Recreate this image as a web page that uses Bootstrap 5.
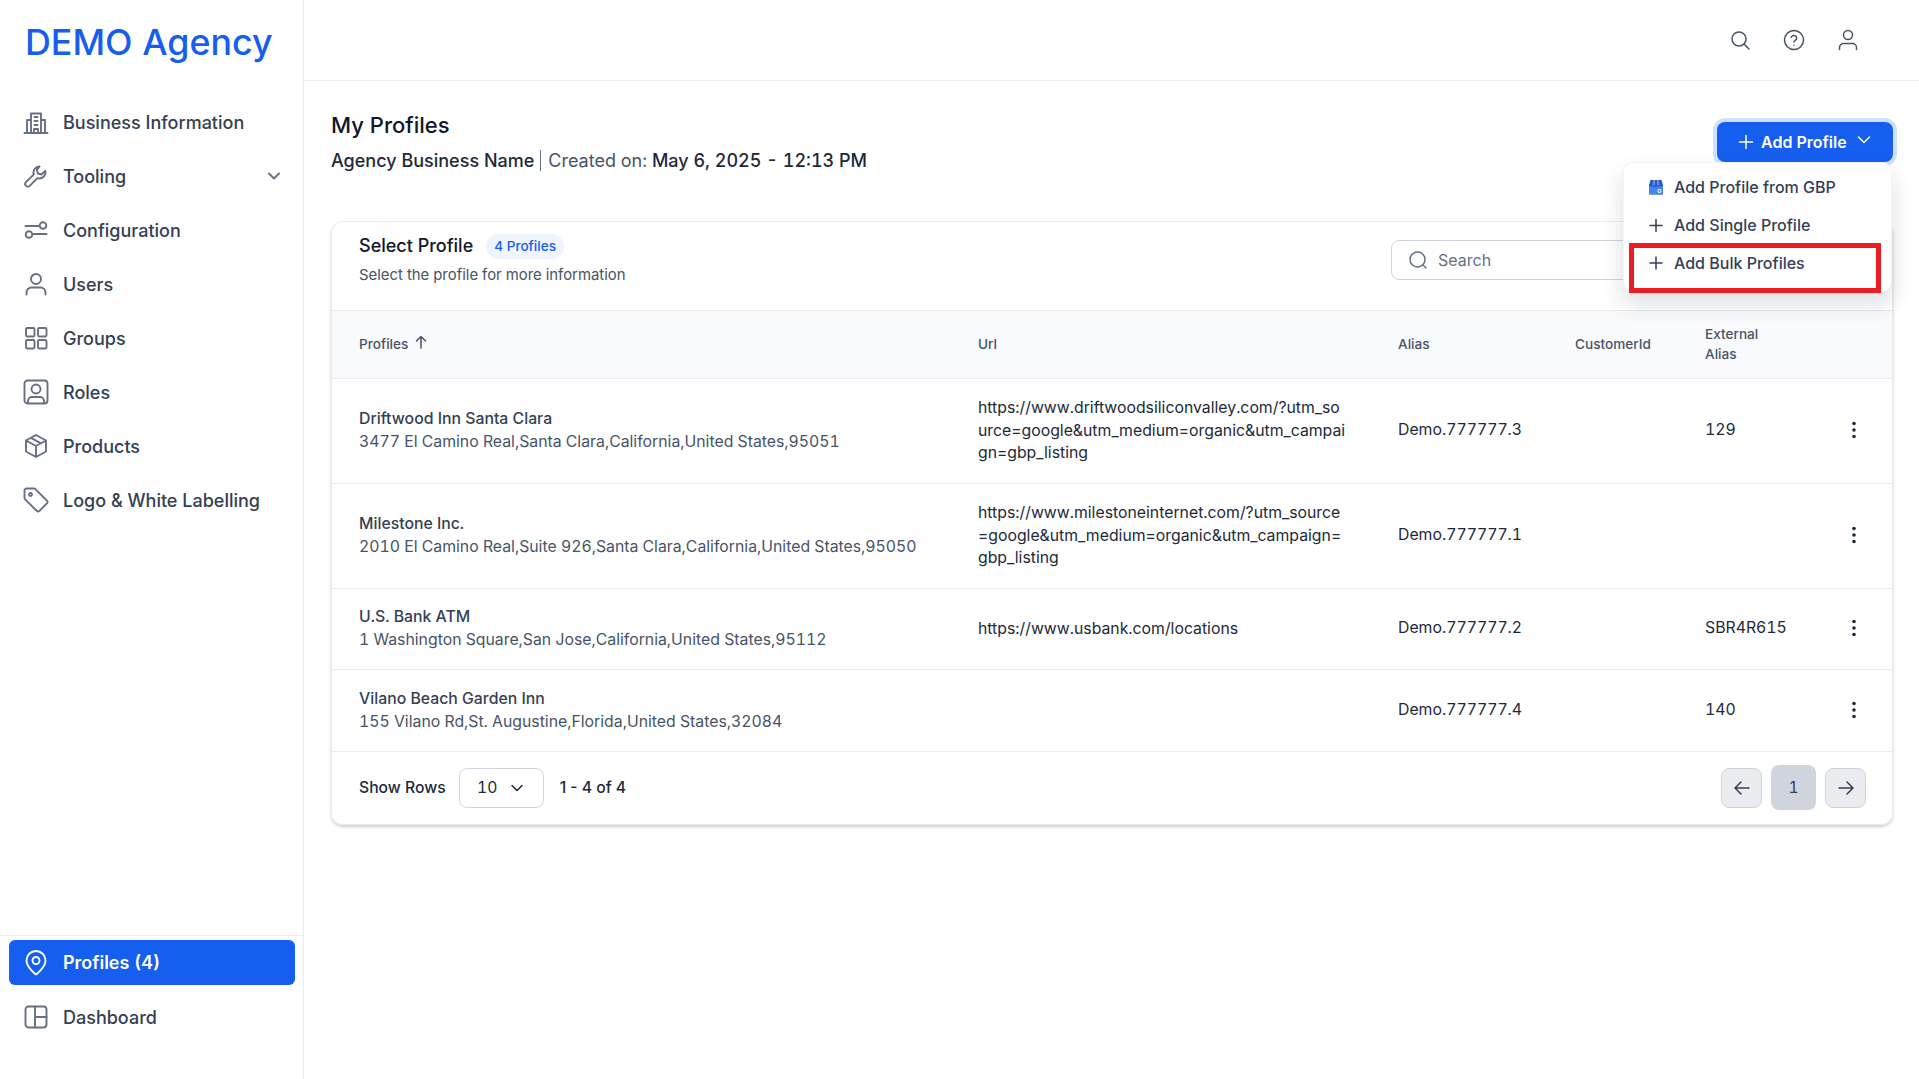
<!DOCTYPE html>
<html lang="en">
<head>
    <meta charset="UTF-8">
    <meta name="viewport" content="width=device-width, initial-scale=1.0">
    <title>My Profiles</title>
    <link href="https://cdn.jsdelivr.net/npm/bootstrap@5.3.2/dist/css/bootstrap.min.css" rel="stylesheet">
    <style>
        body {
            font-family: Inter, "Liberation Sans", sans-serif;
            font-variant-numeric: tabular-nums;
            color: #1d2939;
            background: #fff;
            height: 1079px;
            overflow: hidden;
        }
        svg.ico {
            fill: none;
            stroke: currentColor;
            stroke-width: 1.5;
            stroke-linecap: round;
            stroke-linejoin: round;
            flex-shrink: 0;
        }
        .side-bar {
            width: 304px;
            flex-shrink: 0;
            height: 1079px;
            border-right: 1px solid #eaecf0;
        }
        .brand-name {
            font-size: 35.8px;
            font-weight: 500;
            line-height: 44px;
            color: #155eef;
            padding: 20px 0 0 25px;
            height: 95px;
            white-space: nowrap;
        }
        .side-link {
            display: flex;
            align-items: center;
            height: 54px;
            padding-left: 23px;
            padding-right: 20px;
            font-size: 18px;
            font-weight: 500;
            color: #344054;
            text-decoration: none;
            white-space: nowrap;
        }
        .side-link svg.ico { color: #667085; margin-right: 14px; stroke-width: 1.9; }
        .side-foot {
            margin-top: auto;
            border-top: 1px solid #eaecf0;
            padding: 4px 8px 35px 9px;
        }
        .side-foot .side-link { padding-left: 14px; height: 54px; }
        .side-foot .side-link.is-on {
            height: 45px;
            background: #155eef;
            color: #fff;
            border-radius: 6px;
            margin-bottom: 5px;
            font-weight: 600;
        }
        .side-foot .side-link.is-on svg.ico { color: #fff; }
        .main-area { flex: 1 1 0; min-width: 0; }
        .top-strip {
            height: 81px;
            border-bottom: 1px solid #eaecf0;
            padding-right: 59px;
            color: #475467;
            gap: 30px;
        }
        .page-body { padding: 0 26px 0 27px; position: relative; }
        .page-head { height: 140px; padding-top: 29px; }
        .page-title { font-size: 22px; font-weight: 500; line-height: 30px; color: #101828; margin: 0 0 7px; }
        .page-sub { font-size: 18px; line-height: 28px; font-weight: 500; color: #1d2939; }
        .page-sub .sep { border-left: 1px solid #667085; margin: 0 7px 0 6px; }
        .page-sub .dim { font-weight: 400; color: #475467; }
        .add-btn {
            position: absolute;
            top: 41px;
            right: 26px;
            width: 176px;
            height: 40px;
            background: #155eef;
            color: #fff;
            border: 0;
            border-radius: 8px;
            font-size: 16px;
            font-weight: 600;
            box-shadow: 0 0 0 4px #d1e0ff;
            display: flex;
            align-items: center;
            padding: 0 20px;
            gap: 6px;
            white-space: nowrap;
        }
        .add-menu {
            position: absolute;
            top: 81px;
            right: 27px;
            width: 269px;
            height: 130px;
            background: #fff;
            border: 1px solid #f2f4f7;
            border-radius: 10px;
            box-shadow: 0 12px 24px rgba(16, 24, 40, .14);
            z-index: 5;
            padding-top: 5px;
        }
        .add-menu-row {
            display: flex;
            align-items: center;
            height: 38px;
            padding-left: 24px;
            gap: 10px;
            font-size: 16px;
            font-weight: 500;
            color: #344054;
        }
        .add-menu-row:last-of-type { margin-top: 2px; }
        .add-menu-row svg.ico { color: #344054; }
        .red-box {
            position: absolute;
            left: 5px;
            top: 80px;
            width: 252px;
            height: 50px;
            border: 5px solid #ed1c24;
        }
        .main-card {
            border: 1px solid #eaecf0;
            border-radius: 12px;
            box-shadow: 0 2px 3px rgba(16, 24, 40, .2);
            height: 604px;
            overflow: hidden;
        }
        .card-top { position: relative; height: 89px; padding: 11px 27px 0; border-bottom: 1px solid #eaecf0; }
        .card-name { font-size: 18px; font-weight: 500; color: #101828; line-height: 26px; }
        .count-pill {
            font-size: 13.6px;
            font-weight: 500;
            color: #155eef;
            background: #eff4ff;
            border-radius: 13px;
            padding: 3px 8px;
            margin-left: 13px;
            line-height: 19px;
        }
        .card-hint { font-size: 14.9px; color: #475467; line-height: 20px; margin-top: 6px; }
        .find-box {
            position: absolute;
            left: 1059px;
            top: 18px;
            width: 300px;
            height: 40px;
            border: 1px solid #d0d5dd;
            border-radius: 8px;
            padding-left: 16px;
            gap: 10px;
            font-size: 16px;
            color: #667085;
        }
        .profile-table { table-layout: fixed; width: 100%; border-collapse: collapse; }
        .profile-table th {
            height: 67px;
            background: #f9fafb;
            font-size: 13.6px;
            font-weight: 500;
            color: #475467;
            line-height: 20px;
            border-bottom: 1px solid #eaecf0;
            vertical-align: middle;
        }
        .profile-table td {
            font-size: 15.8px;
            line-height: 22px;
            color: #1d2939;
            border-bottom: 1px solid #eaecf0;
            vertical-align: middle;
            padding-bottom: 2px;
        }
        .profile-table .first-col { padding-left: 27px; }
        .profile-table .dots-col { padding-left: 16px; }
        .row-tall { height: 105px; }
        .row-low { height: 81px; }
        .row-last { height: 82px; }
        .place-name { font-weight: 500; color: #344054; line-height: 23px; }
        .place-addr { color: #475467; line-height: 23px; }
        .url-text { width: 369px; word-break: break-all; line-height: 22.5px; padding-top: 2px; }
        .table-foot { height: 72px; padding: 0 26px 0 27px; font-size: 15.7px; }
        .row-count { font-variant-numeric: normal; }
        .rows-pick {
            width: 85px;
            height: 40px;
            border: 1px solid #d0d5dd;
            border-radius: 8px;
            margin: 0 16px 0 13px;
            gap: 12px;
        }
        .pg-group { gap: 9px; }
        .pg-arrow {
            width: 41px;
            height: 40px;
            background: #eaecf0;
            border: 1px solid #d0d5dd;
            border-radius: 8px;
            color: #344054;
        }
        .pg-now {
            width: 45px;
            height: 45px;
            background: #d0d5dd;
            border-radius: 8px;
            color: #344054;
        }
    </style>
</head>
<body>
<div class="d-flex">
    <aside class="side-bar d-flex flex-column">
        <div class="brand-name">DEMO Agency</div>
        <a class="side-link" href="#"><svg class="ico" width="26" height="26" viewBox="0 0 26 26"><path d="M1.5 24h23M8 24V4.5h10V24M4 24V11h4M22 24V11h-4M11.5 8h3M11.5 12h3M11.5 16h3M11 24v-4h4v4"/></svg>Business Information</a>
        <a class="side-link" href="#"><svg class="ico" width="26" height="26" viewBox="0 0 26 26"><path d="M16.5 3.5a6 6 0 0 0-5.7 7.9L3 19.2a2.6 2.6 0 0 0 3.7 3.7l7.8-7.8a6 6 0 0 0 7.7-7.3l-3.7 3.7-3.6-1-1-3.6z"/></svg>Tooling<svg class="ico ms-auto" style="margin-right:0" width="18" height="18" viewBox="0 0 18 18"><path d="M4 6.5l5 5 5-5"/></svg></a>
        <a class="side-link" href="#"><svg class="ico" width="26" height="26" viewBox="0 0 26 26"><path d="M2.5 9h13M10.5 17h13"/><circle cx="20" cy="8.5" r="3.3"/><circle cx="6" cy="17.5" r="3.3"/></svg>Configuration</a>
        <a class="side-link" href="#"><svg class="ico" width="26" height="26" viewBox="0 0 26 26"><circle cx="13" cy="8" r="5"/><path d="M3.5 23.5v-2a5 5 0 0 1 5-5h9a5 5 0 0 1 5 5v2"/></svg>Users</a>
        <a class="side-link" href="#"><svg class="ico" width="26" height="26" viewBox="0 0 26 26"><rect x="3" y="3" width="8.5" height="8.5" rx="1.2"/><rect x="15" y="3" width="8.5" height="8.5" rx="1.2"/><rect x="3" y="15" width="8.5" height="8.5" rx="1.2"/><rect x="15" y="15" width="8.5" height="8.5" rx="1.2"/></svg>Groups</a>
        <a class="side-link" href="#"><svg class="ico" width="26" height="26" viewBox="0 0 26 26"><rect x="1.5" y="1.5" width="23" height="23" rx="3"/><circle cx="13" cy="10" r="4.5"/><path d="M5 24v-2a4 4 0 0 1 4-4h8a4 4 0 0 1 4 4v2"/></svg>Roles</a>
        <a class="side-link" href="#"><svg class="ico" width="26" height="26" viewBox="0 0 26 26"><path d="M13 2l10 5.5v11L13 24 3 18.500v-11zM3 7.500l10 5.500 10-5.500M13 13v11M8 4.800l10 5.500"/></svg>Products</a>
        <a class="side-link" href="#"><svg class="ico" width="26" height="26" viewBox="0 0 26 26"><path d="M1.500 3.500a2 2 0 0 1 2-2h7.500a2 2 0 0 1 1.400.600l11.500 11.500a2 2 0 0 1 0 2.800l-7.400 7.400a2 2 0 0 1-2.800 0L2.100 12.400a2 2 0 0 1-.6-1.400z"/><circle cx="7.500" cy="7.500" r="1.500"/></svg>Logo &amp; White Labelling</a>
        <div class="side-foot">
            <a class="side-link is-on" href="#"><svg class="ico" width="26" height="26" viewBox="0 0 26 26"><path d="M13 24.500s9.500-7.200 9.500-14a9.500 9.500 0 0 0-19 0c0 6.800 9.500 14 9.500 14z"/><circle cx="13" cy="10.500" r="3.500"/></svg>Profiles (4)</a>
            <a class="side-link" href="#"><svg class="ico" width="26" height="26" viewBox="0 0 26 26"><rect x="2.500" y="2.500" width="21" height="21" rx="3"/><path d="M12 2.500v21M12 13h11.500"/></svg>Dashboard</a>
        </div>
    </aside>
    <div class="main-area">
        <div class="top-strip d-flex align-items-center justify-content-end">
            <svg class="ico" width="24" height="24" viewBox="0 0 24 24"><circle cx="11" cy="11" r="7"/><path d="M16 16l5 5"/></svg>
            <svg class="ico" width="24" height="24" viewBox="0 0 24 24"><circle cx="12" cy="12" r="9.500"/><path d="M9.300 9.300a2.800 2.800 0 0 1 5.400.9c0 1.900-2.700 2.400-2.700 3.800M12 17.200v.1"/></svg>
            <svg class="ico" width="24" height="24" viewBox="0 0 24 24"><circle cx="12" cy="7" r="4.500"/><path d="M3.500 21.500v-2a4 4 0 0 1 4-4h9a4 4 0 0 1 4 4v2"/></svg>
        </div>
        <div class="page-body">
            <div class="page-head">
                <h1 class="page-title">My Profiles</h1>
                <div class="page-sub">Agency Business Name<span class="sep"></span><span class="dim">Created on:</span> May 6, 2025 - 12:13 PM</div>
            </div>
            <button class="add-btn" type="button"><svg class="ico" width="18" height="18" viewBox="0 0 18 18"><path d="M9 2.500v13M2.500 9h13"/></svg>Add Profile<svg class="ico ms-auto" width="18" height="18" viewBox="0 0 18 18" style="margin-top:-4px"><path d="M3.500 6l5.500 5.500L14.500 6"/></svg></button>
            <div class="add-menu">
                <div class="add-menu-row"><svg width="16" height="16" viewBox="0 0 16 16"><path d="M1 6h14v9a.8.8 0 0 1-.8.800H1.800A.8.8 0 0 1 1 15z" fill="#4285f4"/><path d="M2.500 1h11L15 6a2 2 0 0 1-3.500 1A2 2 0 0 1 8 7a2 2 0 0 1-3.500 0A2 2 0 0 1 1 6z" fill="#2c56b8"/><path d="M5 1h2.300L7 6.500H4.300zM8.700 1H11l.7 5.500H9z" fill="#5d89e8"/><circle cx="11.500" cy="12" r="2" fill="#fff"/><circle cx="11.500" cy="12" r="1" fill="#4285f4"/></svg>Add Profile from GBP</div>
                <div class="add-menu-row"><svg class="ico" width="16" height="16" viewBox="0 0 16 16"><path d="M8 2.500v12M2 8.500h12"/></svg>Add Single Profile</div>
                <div class="add-menu-row"><svg class="ico" width="16" height="16" viewBox="0 0 16 16"><path d="M8 2v12M2 8h12"/></svg>Add Bulk Profiles</div>
                <div class="red-box"></div>
            </div>
            <div class="main-card">
                <div class="card-top">
                    <div class="d-flex align-items-center"><span class="card-name">Select Profile</span><span class="count-pill">4 Profiles</span></div>
                    <div class="card-hint">Select the profile for more information</div>
                    <div class="find-box d-flex align-items-center"><svg class="ico" width="20" height="20" viewBox="0 0 20 20"><circle cx="9.500" cy="9.500" r="7.500"/><path d="M15 15l3 3"/></svg>Search</div>
                </div>
                <table class="profile-table">
                    <colgroup><col style="width:645px"><col style="width:420px"><col style="width:177px"><col style="width:130px"><col style="width:122px"><col></colgroup>
                    <thead>
                        <tr>
                            <th class="first-col">Profiles <svg class="ico" width="16" height="16" viewBox="0 0 16 16" style="vertical-align:-1px;margin-left:1px"><path d="M8 14V2.500M3.500 7L8 2.500 12.500 7"/></svg></th>
                            <th>Url</th>
                            <th>Alias</th>
                            <th>CustomerId</th>
                            <th>External<br>Alias</th>
                            <th></th>
                        </tr>
                    </thead>
                    <tbody id="profileRows"></tbody>
                </table>
                <div class="table-foot d-flex align-items-center">
                    <span class="fw-medium">Show Rows</span>
                    <div class="rows-pick d-flex align-items-center justify-content-center">10<svg class="ico" width="16" height="16" viewBox="0 0 16 16"><path d="M3 5.500l5 5 5-5"/></svg></div>
                    <span class="fw-medium row-count">1 - 4 of 4</span>
                    <div class="pg-group ms-auto d-flex align-items-center">
                        <div class="pg-arrow d-flex align-items-center justify-content-center"><svg class="ico" width="20" height="20" viewBox="0 0 20 20"><path d="M17 10H3M9 4l-6 6 6 6"/></svg></div>
                        <div class="pg-now d-flex align-items-center justify-content-center">1</div>
                        <div class="pg-arrow d-flex align-items-center justify-content-center"><svg class="ico" width="20" height="20" viewBox="0 0 20 20"><path d="M3 10h14M11 4l6 6-6 6"/></svg></div>
                    </div>
                </div>
            </div>
        </div>
    </div>
</div>
<script src="https://cdn.jsdelivr.net/npm/bootstrap@5.3.2/dist/js/bootstrap.bundle.min.js"></script>
<script>
    const profiles = [
        { name: 'Driftwood Inn Santa Clara', addr: '3477 El Camino Real,Santa Clara,California,United States,95051', url: 'https://www.driftwoodsiliconvalley.com/?utm_source=google&utm_medium=organic&utm_campaign=gbp_listing', alias: 'Demo.777777.3', ext: '129', rowClass: 'row-tall' },
        { name: 'Milestone Inc.', addr: '2010 El Camino Real,Suite 926,Santa Clara,California,United States,95050', url: 'https://www.milestoneinternet.com/?utm_source=google&utm_medium=organic&utm_campaign=gbp_listing', alias: 'Demo.777777.1', ext: '', rowClass: 'row-tall' },
        { name: 'U.S. Bank ATM', addr: '1 Washington Square,San Jose,California,United States,95112', url: 'https://www.usbank.com/locations', alias: 'Demo.777777.2', ext: 'SBR4R615', rowClass: 'row-low' },
        { name: 'Vilano Beach Garden Inn', addr: '155 Vilano Rd,St. Augustine,Florida,United States,32084', url: '', alias: 'Demo.777777.4', ext: '140', rowClass: 'row-last' }
    ];
    const kebab = '<svg width="24" height="24" viewBox="0 0 24 24" fill="#1d2939"><circle cx="12" cy="5.500" r="1.800"/><circle cx="12" cy="12" r="1.800"/><circle cx="12" cy="18.500" r="1.800"/></svg>';
    document.getElementById('profileRows').innerHTML = profiles.map(p => `
        <tr class="${p.rowClass}">
            <td class="first-col"><div class="place-name">${p.name}</div><div class="place-addr">${p.addr}</div></td>
            <td><div class="url-text">${p.url.replace(/&/g, '&amp;')}</div></td>
            <td>${p.alias}</td>
            <td></td>
            <td>${p.ext}</td>
            <td class="dots-col">${kebab}</td>
        </tr>`).join('');
</script>
</body>
</html>
